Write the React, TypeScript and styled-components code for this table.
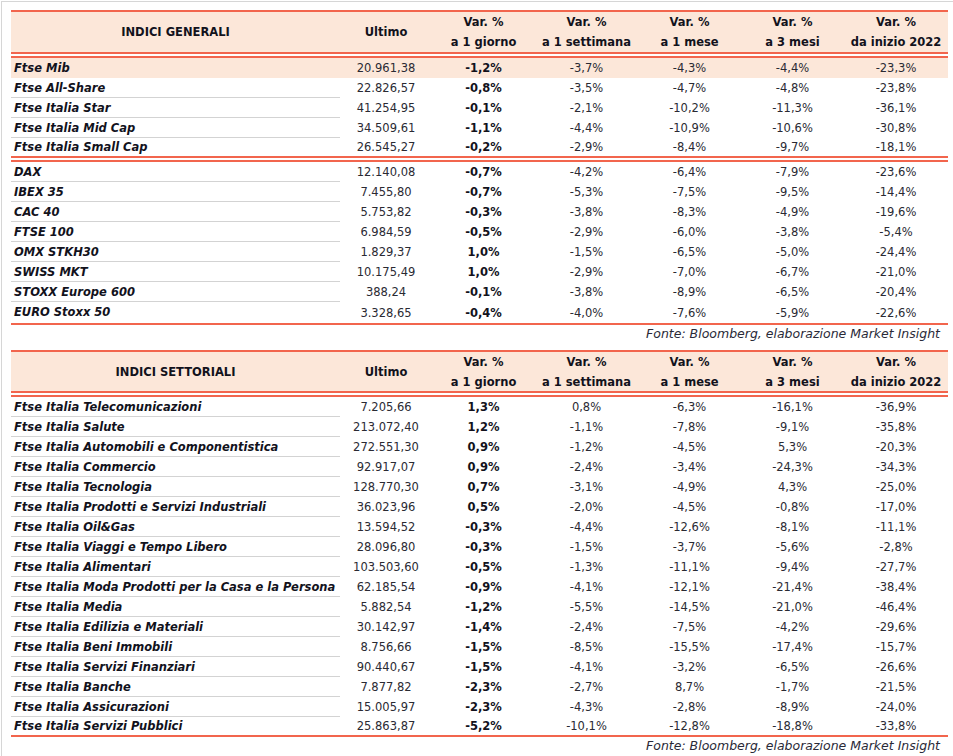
import styled, { createGlobalStyle } from "styled-components";

const GlobalStyle = createGlobalStyle`
  html, body {
    margin: 0;
    padding: 0;
    background: #ffffff;
  }
  body {
    font-family: "DejaVu Sans", "Liberation Sans", sans-serif;
    color: #12121c;
  }
`;

const RED = "#f2654d";
const PEACH = "#fce7d9";
const COLS = "329px 92px 103px 103px 103px 103px 104px";

const Frame = styled.div`
  margin: 1px 0 0 1px;
  border-top: 1px solid #d6d6d6;
  border-left: 1px solid #d6d6d6;
  padding: 8px 5px 10px 9px;
  min-height: 740px;
  box-sizing: border-box;
`;

const Table = styled.div`
  width: 937px;
  display: flex;
  flex-direction: column;
`;

const Rule = styled.div`
  height: 2px;
  background: ${RED};
`;

const DoubleRule = styled.div`
  height: 2px;
  border-top: 2px solid ${RED};
  border-bottom: 2px solid ${RED};
  background: #ffffff;
`;

const HeadRow = styled.div<{ $h: number }>`
  display: grid;
  grid-template-columns: ${COLS};
  height: ${(p) => p.$h}px;
  background: ${PEACH};
  font-weight: bold;
  font-size: 11.5px;
`;

const HeadCell = styled.div`
  display: flex;
  flex-direction: column;
  align-items: center;
  justify-content: center;
  line-height: 20px;
  white-space: nowrap;
`;

const Row = styled.div<{ $hl?: boolean; $h?: number }>`
  display: grid;
  grid-template-columns: ${COLS};
  height: ${(p) => p.$h ?? 20}px;
  align-items: center;
  background: ${(p) => (p.$hl ? PEACH : "transparent")};
  font-size: 11.5px;
`;

const Name = styled.div<{ $sep: boolean }>`
  height: 100%;
  display: flex;
  align-items: center;
  padding-left: 3px;
  font-weight: bold;
  font-style: italic;
  white-space: nowrap;
  box-sizing: border-box;
  border-bottom: 1px solid ${(p) => (p.$sep ? "#d3d3d3" : "transparent")};
`;

const Num = styled.div<{ $bold?: boolean }>`
  text-align: center;
  white-space: nowrap;
  font-weight: ${(p) => (p.$bold ? "bold" : "normal")};
  color: ${(p) => (p.$bold ? "#12121c" : "#2a2a33")};
`;

const Source = styled.div`
  text-align: right;
  padding-right: 8px;
  font-style: italic;
  font-size: 12.5px;
  line-height: 18px;
  color: #2a2a38;
  height: 18px;
`;

const Spacer = styled.div`
  height: 7px;
`;

type Line = [string, string, string, string, string, string, string];

const generaliA: Line[] = [
  ["Ftse Mib", "20.961,38", "-1,2%", "-3,7%", "-4,3%", "-4,4%", "-23,3%"],
  ["Ftse All-Share", "22.826,57", "-0,8%", "-3,5%", "-4,7%", "-4,8%", "-23,8%"],
  ["Ftse Italia Star", "41.254,95", "-0,1%", "-2,1%", "-10,2%", "-11,3%", "-36,1%"],
  ["Ftse Italia Mid Cap", "34.509,61", "-1,1%", "-4,4%", "-10,9%", "-10,6%", "-30,8%"],
  ["Ftse Italia Small Cap", "26.545,27", "-0,2%", "-2,9%", "-8,4%", "-9,7%", "-18,1%"],
];

const generaliB: Line[] = [
  ["DAX", "12.140,08", "-0,7%", "-4,2%", "-6,4%", "-7,9%", "-23,6%"],
  ["IBEX 35", "7.455,80", "-0,7%", "-5,3%", "-7,5%", "-9,5%", "-14,4%"],
  ["CAC 40", "5.753,82", "-0,3%", "-3,8%", "-8,3%", "-4,9%", "-19,6%"],
  ["FTSE 100", "6.984,59", "-0,5%", "-2,9%", "-6,0%", "-3,8%", "-5,4%"],
  ["OMX STKH30", "1.829,37", "1,0%", "-1,5%", "-6,5%", "-5,0%", "-24,4%"],
  ["SWISS MKT", "10.175,49", "1,0%", "-2,9%", "-7,0%", "-6,7%", "-21,0%"],
  ["STOXX Europe 600", "388,24", "-0,1%", "-3,8%", "-8,9%", "-6,5%", "-20,4%"],
  ["EURO Stoxx 50", "3.328,65", "-0,4%", "-4,0%", "-7,6%", "-5,9%", "-22,6%"],
];

const settoriali: Line[] = [
  ["Ftse Italia Telecomunicazioni", "7.205,66", "1,3%", "0,8%", "-6,3%", "-16,1%", "-36,9%"],
  ["Ftse Italia Salute", "213.072,40", "1,2%", "-1,1%", "-7,8%", "-9,1%", "-35,8%"],
  ["Ftse Italia Automobili e Componentistica", "272.551,30", "0,9%", "-1,2%", "-4,5%", "5,3%", "-20,3%"],
  ["Ftse Italia Commercio", "92.917,07", "0,9%", "-2,4%", "-3,4%", "-24,3%", "-34,3%"],
  ["Ftse Italia Tecnologia", "128.770,30", "0,7%", "-3,1%", "-4,9%", "4,3%", "-25,0%"],
  ["Ftse Italia Prodotti e Servizi Industriali", "36.023,96", "0,5%", "-2,0%", "-4,5%", "-0,8%", "-17,0%"],
  ["Ftse Italia Oil&Gas", "13.594,52", "-0,3%", "-4,4%", "-12,6%", "-8,1%", "-11,1%"],
  ["Ftse Italia Viaggi e Tempo Libero", "28.096,80", "-0,3%", "-1,5%", "-3,7%", "-5,6%", "-2,8%"],
  ["Ftse Italia Alimentari", "103.503,60", "-0,5%", "-1,3%", "-11,1%", "-9,4%", "-27,7%"],
  ["Ftse Italia Moda Prodotti per la Casa e la Persona", "62.185,54", "-0,9%", "-4,1%", "-12,1%", "-21,4%", "-38,4%"],
  ["Ftse Italia Media", "5.882,54", "-1,2%", "-5,5%", "-14,5%", "-21,0%", "-46,4%"],
  ["Ftse Italia Edilizia e Materiali", "30.142,97", "-1,4%", "-2,4%", "-7,5%", "-4,2%", "-29,6%"],
  ["Ftse Italia Beni Immobili", "8.756,66", "-1,5%", "-8,5%", "-15,5%", "-17,4%", "-15,7%"],
  ["Ftse Italia Servizi Finanziari", "90.440,67", "-1,5%", "-4,1%", "-3,2%", "-6,5%", "-26,6%"],
  ["Ftse Italia Banche", "7.877,82", "-2,3%", "-2,7%", "8,7%", "-1,7%", "-21,5%"],
  ["Ftse Italia Assicurazioni", "15.005,97", "-2,3%", "-4,3%", "-2,8%", "-8,9%", "-24,0%"],
  ["Ftse Italia Servizi Pubblici", "25.863,87", "-5,2%", "-10,1%", "-12,8%", "-18,8%", "-33,8%"],
];

function Header({ title, h }: { title: string; h: number }) {
  const periods = ["a 1 giorno", "a 1 settimana", "a 1 mese", "a 3 mesi", "da inizio 2022"];
  return (
    <HeadRow $h={h}>
      <HeadCell>{title}</HeadCell>
      <HeadCell>Ultimo</HeadCell>
      {periods.map((p) => (
        <HeadCell key={p}>
          <span>Var. %</span>
          <span>{p}</span>
        </HeadCell>
      ))}
    </HeadRow>
  );
}

function Group({ rows, highlightFirst, lastHeight }: { rows: Line[]; highlightFirst?: boolean; lastHeight?: number }) {
  return (
    <>
      {rows.map((r, i) => {
        const last = i === rows.length - 1;
        return (
          <Row key={r[0]} $hl={highlightFirst && i === 0} $h={last ? lastHeight : undefined}>
            <Name $sep={!last && !(highlightFirst && i === 0)}>{r[0]}</Name>
            <Num>{r[1]}</Num>
            <Num $bold>{r[2]}</Num>
            <Num>{r[3]}</Num>
            <Num>{r[4]}</Num>
            <Num>{r[5]}</Num>
            <Num>{r[6]}</Num>
          </Row>
        );
      })}
    </>
  );
}

export default function App() {
  return (
    <>
      <GlobalStyle />
      <Frame>
        <Table>
          <Rule />
          <Header title="INDICI GENERALI" h={40} />
          <DoubleRule />
          <Group rows={generaliA} highlightFirst lastHeight={18} />
          <DoubleRule />
          <Group rows={generaliB} lastHeight={21} />
          <Rule />
          <Source>Fonte: Bloomberg, elaborazione Market Insight</Source>
        </Table>
        <Spacer />
        <Table>
          <Rule />
          <Header title="INDICI SETTORIALI" h={39} />
          <DoubleRule />
          <Group rows={settoriali} lastHeight={18} />
          <Rule />
          <Source>Fonte: Bloomberg, elaborazione Market Insight</Source>
        </Table>
      </Frame>
    </>
  );
}
